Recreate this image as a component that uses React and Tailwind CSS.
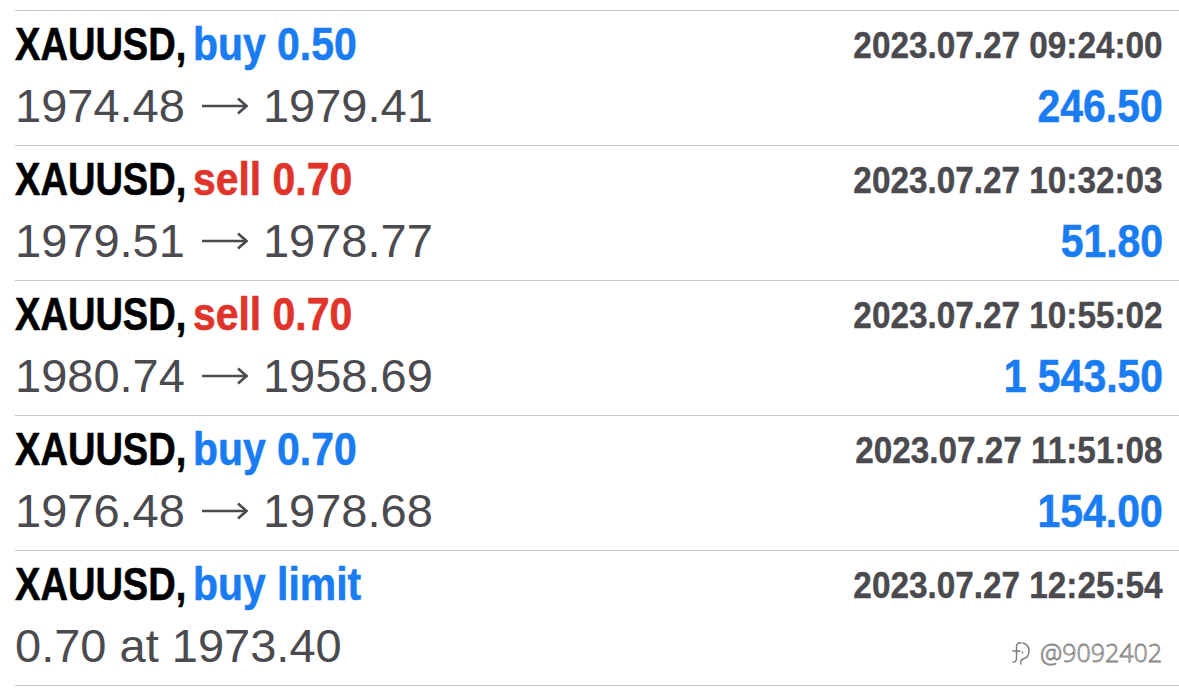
const rows = [
  { side: "buy 0.50", color: "text-[#1a7cf2]", date: "2023.07.27 09:24:00", a: "1974.48", b: "1979.41", profit: "246.50" },
  { side: "sell 0.70", color: "text-[#e0342a]", date: "2023.07.27 10:32:03", a: "1979.51", b: "1978.77", profit: "51.80" },
  { side: "sell 0.70", color: "text-[#e0342a]", date: "2023.07.27 10:55:02", a: "1980.74", b: "1958.69", profit: "1 543.50" },
  { side: "buy 0.70", color: "text-[#1a7cf2]", date: "2023.07.27 11:51:08", a: "1976.48", b: "1978.68", profit: "154.00" },
  { side: "buy limit", color: "text-[#1a7cf2]", date: "2023.07.27 12:25:54", plain: "0.70 at 1973.40", profit: "" },
];

const font = { fontFamily: '"Liberation Sans", Arial, sans-serif' };

function Arrow() {
  return (
    <svg width="46" height="20" viewBox="0 0 46 20" className="inline-block ml-[17px] mr-[15px] align-[6px]">
      <line x1="0" y1="10" x2="44" y2="10" stroke="#4a4a4f" strokeWidth="2.6" />
      <path d="M36 2.5 L44.5 10 L36 17.5" fill="none" stroke="#4a4a4f" strokeWidth="2.6" />
    </svg>
  );
}

export default function App() {
  return (
    <div className="w-[1179px] h-[689px] bg-white overflow-hidden pt-[10px] relative" style={font}>
      <div className="ml-[15px] border-t border-[#c8c8cc]">
        {rows.map((r, i) => (
          <div key={i} className="h-[135px] border-b border-[#c8c8cc] pr-[16px] pt-[5px] flex flex-col">
            <div className="flex items-start justify-between h-[56px]">
              <div className="text-[47px] font-bold leading-[56px] whitespace-nowrap [-webkit-text-stroke:0.6px_currentColor]">
                <span className="inline-block origin-left scale-x-[0.81] mr-[-40px] text-black">XAUUSD,</span>
                <span className={"inline-block origin-left scale-x-[0.87] ml-[6px] " + r.color}>{r.side}</span>
              </div>
              <div className="text-[37px] font-bold text-[#4a4a4f] leading-[44px] mt-[8px] whitespace-nowrap origin-right scale-x-[0.9] [-webkit-text-stroke:0.4px_currentColor]">{r.date}</div>
            </div>
            <div className="flex items-baseline justify-between mt-[6px]">
              <div className="text-[47px] text-[#4a4a4f] leading-[56px] whitespace-nowrap">
                {r.plain ? r.plain : (<>{r.a}<Arrow />{r.b}</>)}
              </div>
              <div className="text-[46px] font-bold text-[#1a7cf2] leading-[56px] whitespace-nowrap origin-right scale-x-[0.89] [-webkit-text-stroke:0.6px_currentColor]">{r.profit}</div>
            </div>
          </div>
        ))}
      </div>
      <div className="absolute left-[1010px] top-[634px] flex items-center gap-[8px]">
        <svg width="22" height="30" viewBox="0 0 22 30" fill="none" stroke="#7a7a7a" strokeWidth="1.4" strokeLinecap="round" strokeLinejoin="round">
          <path d="M11 5 C8 4 6.5 6 6.5 9 L6.5 20 C6.5 23 5 24.5 3 24" />
          <path d="M3 13 L10 13" />
          <path d="M13 5 C17 6 19 9 19 13 C19 17 17 20 13 21 C11 22 10 24 11 26" />
          <path d="M12.5 14 L12.5 15" />
        </svg>
        <span className="text-[25px] text-white [-webkit-text-stroke:0.8px_#7a7a7a] font-light" style={{ fontFamily: '"Open Sans", sans-serif' }}>@9092402</span>
      </div>
    </div>
  );
}
